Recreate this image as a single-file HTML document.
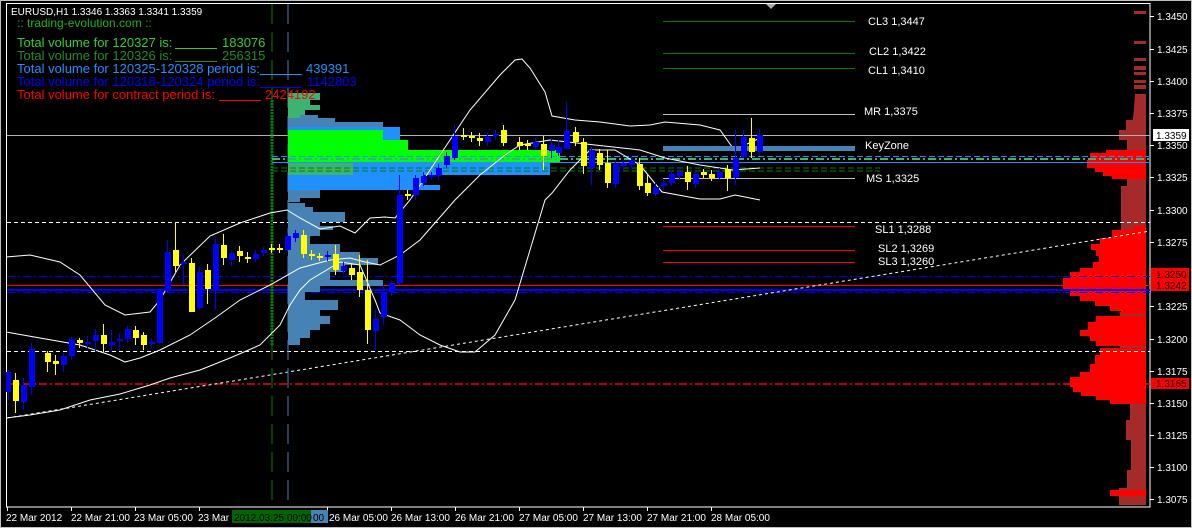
<!DOCTYPE html>
<html><head><meta charset="utf-8"><style>
html,body{margin:0;padding:0;background:#000;width:1192px;height:528px;overflow:hidden}
svg{display:block}
text{font-family:"Liberation Sans",Arial,sans-serif}
</style></head><body>
<svg width="1192" height="528" viewBox="0 0 1192 528" xmlns="http://www.w3.org/2000/svg">
<rect x="0" y="0" width="1192" height="528" fill="#000"/>
<rect x="0.5" y="0.5" width="1191" height="527" fill="none" stroke="#c0c0c0"/>
<rect x="6.5" y="3.5" width="1143.5" height="503.5" fill="none" stroke="#fff"/>
<polygon points="766,4 776,4 771,9" fill="#aaa"/>

<g fill="#a52a2a">
<rect x="1134" y="11" width="12" height="3"/>
<rect x="1134" y="41" width="12" height="3"/>
<rect x="1134" y="58" width="12" height="3"/>
<rect x="1134" y="66" width="12" height="4"/>
<rect x="1134" y="72" width="12" height="3"/>
<rect x="1134" y="80" width="12" height="3"/>
<rect x="1134" y="85" width="12" height="4"/>
<polygon points="1135,94 1146,94 1146,505 1119,505 1119,488 1127,488 1127,470 1131,470 1131,440 1126,440 1126,420 1130,420 1130,404 1120,404 1120,312 1121,312 1121,186 1127,186 1127,140 1119,140 1119,130 1126,130 1126,120 1133,120"/>
</g>
<g fill="#ff0000">
<polygon points="1146,150 1106,150 1106,153 1090,153 1090,160 1087,160 1087,168 1095,168 1095,172 1103,172 1103,176 1112,176 1112,179 1146,179"/>
<polygon points="1146,226 1134,226 1134,230 1112,230 1112,238 1100,238 1100,244 1091,244 1091,250 1096,250 1096,256 1099,256 1099,262 1093,262 1093,268 1080,268 1080,272 1070,272 1070,278 1063,278 1063,291 1070,291 1070,296 1080,296 1080,301 1095,301 1095,306 1110,306 1110,311 1121,311 1121,314 1146,314"/>
<polygon points="1146,316 1096,316 1096,322 1088,322 1088,330 1080,330 1080,336 1090,336 1090,341 1096,341 1096,346 1146,346"/>
<polygon points="1146,348 1100,348 1100,355 1095,355 1095,364 1090,364 1090,372 1080,372 1080,377 1070,377 1070,387 1073,387 1073,392 1081,392 1081,396 1096,396 1096,400 1110,400 1110,404 1146,404"/>
<rect x="1110" y="490" width="36" height="6"/>
</g>

<line x1="7" y1="135.5" x2="1150" y2="135.5" stroke="#b0b0b0"/>
<line x1="7" y1="222.5" x2="1150" y2="222.5" stroke="#fff" stroke-dasharray="4,3"/>
<line x1="7" y1="351.5" x2="1150" y2="351.5" stroke="#fff" stroke-dasharray="4,3"/>
<line x1="7" y1="276.5" x2="1150" y2="276.5" stroke="#0000ff" stroke-dasharray="8,3,2,3"/>
<line x1="7" y1="285.5" x2="1150" y2="285.5" stroke="#ff0000"/>
<line x1="7" y1="290" x2="1150" y2="290" stroke="#0000ff" stroke-width="2"/>
<line x1="7" y1="292.5" x2="1150" y2="292.5" stroke="#0000ff" stroke-dasharray="8,3,2,3"/>
<line x1="7" y1="384" x2="1150" y2="384" stroke="#ff0000" stroke-width="1.5" stroke-dasharray="8,3,2,3"/>
<line x1="7" y1="418" x2="1150" y2="231" stroke="#fff" stroke-dasharray="3,3"/>

<line x1="272" y1="4" x2="272" y2="506" stroke="#008000" stroke-dasharray="20,8"/>
<line x1="288" y1="4" x2="288" y2="506" stroke="#4682b4" stroke-dasharray="20,8"/>
<line x1="272" y1="100" x2="272" y2="345" stroke="#008000" stroke-width="3" stroke-dasharray="2,1"/>

<!-- left volume profile -->
<g>
<rect x="288" y="93" width="32" height="7" fill="#3cb371"/>
<rect x="288" y="100" width="22" height="5" fill="#3cb371"/>
<rect x="288" y="105" width="32" height="5" fill="#3cb371"/>
<rect x="288" y="110" width="17" height="8" fill="#3cb371"/>
<rect x="300" y="115" width="18" height="4" fill="#4682b4"/>
<rect x="288" y="118" width="47" height="4" fill="#4682b4"/>
<rect x="288" y="122" width="95" height="5" fill="#4682b4"/>
<rect x="288" y="127" width="112" height="5" fill="#1e90ff"/>
<rect x="288" y="132" width="112" height="18" fill="#1e90ff"/>
<rect x="288" y="130" width="95" height="10" fill="#00ff00"/>
<rect x="288" y="140" width="120" height="10" fill="#00ff00"/>
<rect x="288" y="150" width="272" height="13" fill="#00ff00"/>
<rect x="288" y="163" width="262" height="12" fill="#1e90ff"/>
<rect x="288" y="163" width="65" height="14" fill="#3cb371"/>
<rect x="288" y="175" width="135" height="10" fill="#1e90ff"/>
<rect x="288" y="185" width="152" height="5" fill="#1e90ff"/>
<rect x="288" y="190" width="32" height="8" fill="#4682b4"/>
<rect x="288" y="198" width="12" height="4" fill="#4682b4"/>
<polygon points="288,203 305,203 305,207 313,207 313,212 345,212 345,222 320,222 320,226 333,226 333,230 320,230 320,236 310,236 310,244 340,244 340,252 360,252 360,258 378,258 378,265 345,265 345,272 330,272 330,280 383,280 383,286 320,286 320,292 305,292 305,300 338,300 338,310 320,310 320,316 330,316 330,324 320,324 320,330 310,330 310,338 300,338 300,345 288,345" fill="#4682b4"/>
</g>
<line x1="272" y1="156.5" x2="1150" y2="156.5" stroke="#1e90ff" stroke-dasharray="6,3"/>
<line x1="272" y1="159" x2="1150" y2="159" stroke="#3cb371" stroke-width="2" stroke-dasharray="8,3,2,3"/>
<line x1="272" y1="162.5" x2="1150" y2="162.5" stroke="#1e90ff"/>
<line x1="272" y1="168" x2="880" y2="168" stroke="#008000" stroke-dasharray="6,3"/>
<line x1="272" y1="171" x2="880" y2="171" stroke="#008000" stroke-dasharray="6,3"/>

<g fill="none" stroke="#fff" stroke-width="1">
<polyline points="6,257 30,255 60,262 80,275 105,305 125,315 150,312 160,300 180,265 210,236 240,223 270,213 287,210 300,218 320,229 340,226 355,233 370,218 385,217 395,218 410,200 440,155 470,110 500,75 515,60 522,59 530,68 545,92 552,116 575,120 600,122 630,126 650,125 665,122 700,125 720,130 735,151 745,145 760,138"/>
<polyline points="6,332 40,338 80,345 110,355 125,362 140,358 160,350 190,335 215,318 240,300 270,285 300,268 330,260 350,258 365,262 380,265 400,255 420,240 455,200 480,175 505,155 520,145 550,140 595,145 640,150 665,158 700,165 733,170 760,168"/>
<polyline points="6,418 30,415 60,410 90,400 120,394 150,385 170,378 200,370 230,358 260,345 280,325 290,305 300,290 310,280 340,262 360,265 375,300 380,313 400,320 420,335 440,345 460,352 475,352 495,335 515,300 530,250 545,200 552,193 570,170 590,150 615,150 640,165 662,192 700,199 720,199 735,195 760,200"/>
</g>

<line x1="663" y1="21.5" x2="855" y2="21.5" stroke="#008000"/>
<line x1="663" y1="53.5" x2="855" y2="53.5" stroke="#008000"/>
<line x1="663" y1="68.5" x2="855" y2="68.5" stroke="#008000"/>
<line x1="663" y1="114.5" x2="855" y2="114.5" stroke="#c0c0c0"/>
<rect x="663" y="146" width="192" height="5" fill="#4682b4"/>
<line x1="663" y1="178.5" x2="855" y2="178.5" stroke="#c0c0c0"/>
<line x1="663" y1="226.5" x2="855" y2="226.5" stroke="#ff0000"/>
<line x1="663" y1="250.5" x2="855" y2="250.5" stroke="#ff0000"/>
<line x1="663" y1="262.5" x2="855" y2="262.5" stroke="#ff0000"/>
<g fill="#fff" font-size="11">
<text x="868" y="25">CL3 1,3447</text>
<text x="869" y="55">CL2 1,3422</text>
<text x="868" y="74">CL1 1,3410</text>
<text x="864" y="115">MR 1,3375</text>
<text x="865" y="149">KeyZone</text>
<text x="866" y="182">MS 1,3325</text>
<text x="875" y="233">SL1 1,3288</text>
<text x="878" y="252">SL2 1,3269</text>
<text x="878" y="265">SL3 1,3260</text>
</g>

<text x="11" y="15" fill="#fff" font-size="10">EURUSD,H1  1.3346 1.3363 1.3341 1.3359</text>
<text x="17" y="27" fill="#20b020" font-size="12">:: trading-evolution.com ::</text>
<g font-size="13">
<text x="17" y="47" fill="#32cd32">Total volume for 120327 is:</text>
<line x1="175" y1="48.5" x2="217" y2="48.5" stroke="#32cd32"/>
<text x="222" y="47" fill="#32cd32">183076</text>
<text x="17" y="60" fill="#228b22">Total volume for 120326 is:</text>
<line x1="175" y1="61.5" x2="217" y2="61.5" stroke="#228b22"/>
<text x="222" y="60" fill="#228b22">256315</text>
<text x="17" y="73" fill="#1e90ff">Total volume for 120325-120328 period is:</text>
<line x1="260" y1="74.5" x2="302" y2="74.5" stroke="#1e90ff"/>
<text x="306" y="73" fill="#1e90ff">439391</text>
<text x="17" y="86" fill="#0000ff">Total volume for 120318-120324 period is:</text>
<line x1="260" y1="87.5" x2="302" y2="87.5" stroke="#0000ff"/>
<text x="307" y="86" fill="#0000ff">1142803</text>
<text x="17" y="99" fill="#ff0000">Total volume for contract period is:</text>
<line x1="219" y1="100.5" x2="261" y2="100.5" stroke="#ff0000"/>
<text x="265" y="99" fill="#ff0000">2424192</text>
</g>

<g fill="#fff" font-size="10">
<g stroke="#fff">
<line x1="1150" y1="16.5" x2="1154" y2="16.5"/><line x1="1150" y1="49.5" x2="1154" y2="49.5"/><line x1="1150" y1="81.5" x2="1154" y2="81.5"/><line x1="1150" y1="113.5" x2="1154" y2="113.5"/><line x1="1150" y1="145.5" x2="1154" y2="145.5"/><line x1="1150" y1="177.5" x2="1154" y2="177.5"/><line x1="1150" y1="210.5" x2="1154" y2="210.5"/><line x1="1150" y1="242.5" x2="1154" y2="242.5"/><line x1="1150" y1="306.5" x2="1154" y2="306.5"/><line x1="1150" y1="339.5" x2="1154" y2="339.5"/><line x1="1150" y1="371.5" x2="1154" y2="371.5"/><line x1="1150" y1="403.5" x2="1154" y2="403.5"/><line x1="1150" y1="435.5" x2="1154" y2="435.5"/><line x1="1150" y1="467.5" x2="1154" y2="467.5"/><line x1="1150" y1="499.5" x2="1154" y2="499.5"/>
</g>
<text x="1157" y="20">1.3450</text><text x="1157" y="53">1.3425</text><text x="1157" y="85">1.3400</text><text x="1157" y="117">1.3375</text><text x="1157" y="149">1.3350</text><text x="1157" y="181">1.3325</text><text x="1157" y="214">1.3300</text><text x="1157" y="246">1.3275</text><text x="1157" y="310">1.3225</text><text x="1157" y="343">1.3200</text><text x="1157" y="375">1.3175</text><text x="1157" y="407">1.3150</text><text x="1157" y="439">1.3125</text><text x="1157" y="471">1.3100</text><text x="1157" y="503">1.3075</text>
</g>
<rect x="1153" y="129" width="36" height="12" fill="#fff"/>
<text x="1156" y="139" fill="#000" font-size="10">1.3359</text>
<rect x="1151" y="268" width="38" height="12" fill="#ff0000"/>
<rect x="1151" y="280" width="38" height="11" fill="#ff0000"/>
<rect x="1151" y="378" width="38" height="11" fill="#ff0000"/>
<g fill="#000" font-size="10">
<text x="1156" y="278">1.3250</text><text x="1156" y="289">1.3242</text><text x="1156" y="387">1.3165</text>
</g>

<g stroke="#fff">
<line x1="7.5" y1="507" x2="7.5" y2="511"/><line x1="71.5" y1="507" x2="71.5" y2="511"/><line x1="135.5" y1="507" x2="135.5" y2="511"/><line x1="199.5" y1="507" x2="199.5" y2="511"/><line x1="327.5" y1="507" x2="327.5" y2="511"/><line x1="391.5" y1="507" x2="391.5" y2="511"/><line x1="455.5" y1="507" x2="455.5" y2="511"/><line x1="519.5" y1="507" x2="519.5" y2="511"/><line x1="583.5" y1="507" x2="583.5" y2="511"/><line x1="647.5" y1="507" x2="647.5" y2="511"/><line x1="711.5" y1="507" x2="711.5" y2="511"/>
</g>
<rect x="232" y="510" width="80" height="13" fill="#006400"/>
<rect x="311" y="510" width="17" height="13" fill="#4682b4"/>
<g fill="#fff" font-size="10">
<text x="6" y="521">22 Mar 2012</text><text x="71" y="521">22 Mar 21:00</text><text x="134" y="521">23 Mar 05:00</text><text x="198" y="521">23 Mar</text>
<text x="329" y="521">26 Mar 05:00</text><text x="391" y="521">26 Mar 13:00</text><text x="455" y="521">26 Mar 21:00</text><text x="519" y="521">27 Mar 05:00</text><text x="583" y="521">27 Mar 13:00</text><text x="647" y="521">27 Mar 21:00</text><text x="711" y="521">28 Mar 05:00</text>
</g>
<text x="234" y="521" fill="#000" font-size="10">2012.03.25 00:00</text>
<text x="313" y="521" fill="#000" font-size="10">00</text>

<g fill="#0000ff">
<rect x="6" y="372" width="5" height="20"/><rect x="8" y="370" width="1" height="30"/>
</g>
<g>
<g stroke="#ffff00">
<path d="M15.5 373V413M47.5 351V372M55.5 355V375M79.5 338V348M103.5 324V352M135.5 326V345M143.5 332V350M175.5 222V272M191.5 258V312M207.5 264V304M223.5 234V265M239.5 246V262M247.5 252V263M271.5 244V253M279.5 244V253M303.5 230V258M311.5 250V260M319.5 253V261M335.5 245V275M351.5 264V280M359.5 255V297M367.5 260V344M407.5 190V200M463.5 128V140M471.5 132V142M479.5 133V146M503.5 125V146M519.5 137V150M527.5 140V150M543.5 136V170M575.5 127V146M583.5 138V174M599.5 149V170M607.5 150V188M639.5 158V190M647.5 175V196M687.5 166V190M703.5 169V178M711.5 170V181M727.5 165V191M751.5 118V158" fill="none"/>
</g>
<g fill="#ffff00">
<rect x="13" y="380" width="6" height="21"/><rect x="45" y="353" width="6" height="9"/><rect x="53" y="361" width="6" height="3"/><rect x="77" y="340" width="6" height="3"/><rect x="101" y="335" width="6" height="9"/><rect x="133" y="330" width="6" height="8"/><rect x="141" y="335" width="6" height="10"/><rect x="173" y="250" width="6" height="16"/><rect x="189" y="263" width="6" height="49"/><rect x="205" y="270" width="6" height="19"/><rect x="221" y="245" width="6" height="13"/><rect x="237" y="251" width="6" height="5"/><rect x="245" y="257" width="6" height="2"/><rect x="269" y="248" width="6" height="2"/><rect x="277" y="248" width="6" height="2"/><rect x="301" y="235" width="6" height="19"/><rect x="309" y="254" width="6" height="2"/><rect x="317" y="256" width="6" height="2"/><rect x="333" y="254" width="6" height="16"/><rect x="349" y="268" width="6" height="7"/><rect x="357" y="272" width="6" height="18"/><rect x="365" y="290" width="6" height="40"/><rect x="405" y="194" width="6" height="2"/><rect x="461" y="135" width="6" height="2"/><rect x="469" y="136" width="6" height="2"/><rect x="477" y="138" width="6" height="3"/><rect x="501" y="130" width="6" height="13"/><rect x="517" y="142" width="6" height="4"/><rect x="525" y="144" width="6" height="2"/><rect x="541" y="144" width="6" height="12"/><rect x="573" y="132" width="6" height="10"/><rect x="581" y="142" width="6" height="24"/><rect x="597" y="153" width="6" height="12"/><rect x="605" y="163" width="6" height="20"/><rect x="637" y="164" width="6" height="22"/><rect x="645" y="183" width="6" height="10"/><rect x="685" y="172" width="6" height="10"/><rect x="701" y="172" width="6" height="3"/><rect x="709" y="174" width="6" height="4"/><rect x="725" y="169" width="6" height="9"/><rect x="749" y="138" width="6" height="14"/>
</g>
<g stroke="#0000ff">
<path d="M23.5 378V410M31.5 343V395M63.5 353V372M71.5 337V360M87.5 336V349M95.5 329V352M111.5 330V352M119.5 333V350M127.5 326V343M151.5 338V348M159.5 290V344M167.5 240V292M183.5 255V285M199.5 266V310M215.5 237V310M231.5 250V266M255.5 250V262M263.5 247V256M287.5 233V252M295.5 230V242M327.5 251V261M343.5 262V275M375.5 310V350M383.5 285V325M391.5 280V296M399.5 175V285M415.5 175V200M423.5 172V186M431.5 172V180M438.5 164V180M446.5 152V168M454.5 125V160M487.5 132V146M495.5 130V140M535.5 138V150M551.5 138V158M558.5 140V156M566.5 102V150M591.5 147V185M615.5 160V188M623.5 160V170M631.5 156V168M655.5 182V196M663.5 180V190M671.5 170V186M679.5 168V180M695.5 170V188M719.5 168V180M735.5 130V185M743.5 130V158M759.5 129V156" fill="none"/>
</g>
<g fill="#0000ff">
<rect x="21" y="385" width="6" height="17"/><rect x="29" y="349" width="6" height="38"/><rect x="61" y="356" width="6" height="9"/><rect x="69" y="339" width="6" height="17"/><rect x="85" y="342" width="6" height="2"/><rect x="93" y="335" width="6" height="6"/><rect x="109" y="342" width="6" height="3"/><rect x="117" y="339" width="6" height="2"/><rect x="125" y="329" width="6" height="10"/><rect x="149" y="342" width="6" height="2"/><rect x="157" y="291" width="6" height="52"/><rect x="165" y="252" width="6" height="39"/><rect x="181" y="262" width="6" height="2"/><rect x="197" y="272" width="6" height="36"/><rect x="213" y="244" width="6" height="46"/><rect x="229" y="253" width="6" height="7"/><rect x="253" y="254" width="6" height="5"/><rect x="261" y="250" width="6" height="3"/><rect x="285" y="236" width="6" height="14"/><rect x="293" y="233" width="6" height="5"/><rect x="325" y="255" width="6" height="2"/><rect x="341" y="266" width="6" height="5"/><rect x="373" y="319" width="6" height="12"/><rect x="381" y="292" width="6" height="25"/><rect x="389" y="283" width="6" height="9"/><rect x="397" y="195" width="6" height="88"/><rect x="413" y="178" width="6" height="17"/><rect x="421" y="176" width="6" height="7"/><rect x="429" y="175" width="6" height="2"/><rect x="436" y="168" width="6" height="8"/><rect x="444" y="156" width="6" height="9"/><rect x="452" y="136" width="6" height="22"/><rect x="485" y="137" width="6" height="5"/><rect x="493" y="134" width="6" height="2"/><rect x="533" y="142" width="6" height="5"/><rect x="549" y="145" width="6" height="6"/><rect x="556" y="147" width="6" height="6"/><rect x="564" y="131" width="6" height="18"/><rect x="589" y="150" width="6" height="18"/><rect x="613" y="164" width="6" height="20"/><rect x="621" y="163" width="6" height="3"/><rect x="629" y="160" width="6" height="5"/><rect x="653" y="187" width="6" height="7"/><rect x="661" y="183" width="6" height="3"/><rect x="669" y="174" width="6" height="9"/><rect x="677" y="172" width="6" height="4"/><rect x="693" y="174" width="6" height="10"/><rect x="717" y="172" width="6" height="6"/><rect x="733" y="158" width="6" height="20"/><rect x="741" y="137" width="6" height="20"/><rect x="757" y="135" width="6" height="17"/>
</g>
</g>
</svg>
</body></html>
